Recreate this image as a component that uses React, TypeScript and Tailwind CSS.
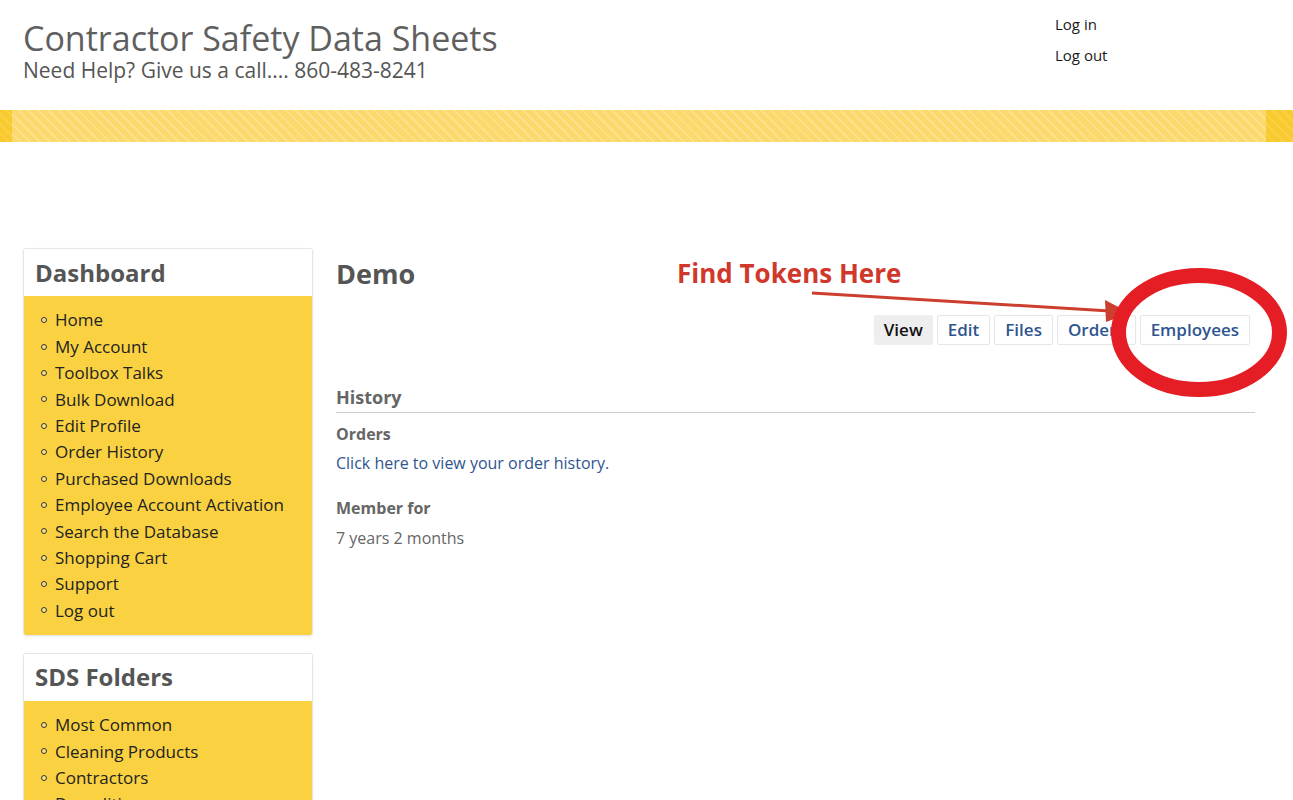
import React from "react";

const dashboardLinks = [
  "Home",
  "My Account",
  "Toolbox Talks",
  "Bulk Download",
  "Edit Profile",
  "Order History",
  "Purchased Downloads",
  "Employee Account Activation",
  "Search the Database",
  "Shopping Cart",
  "Support",
  "Log out",
];

const folderLinks = ["Most Common", "Cleaning Products", "Contractors", "Demolition"];

const tabs = ["View", "Edit", "Files", "Orders", "Employees"];

function SideBlock({ title, links }: { title: string; links: string[] }) {
  return (
    <div className="overflow-hidden rounded-[3px] border border-[#e6e6e6] shadow-[0_1px_3px_rgba(0,0,0,0.06)]">
      <div className="flex h-[47px] items-center bg-white px-[11px] text-[24px] font-bold text-[#555]">
        {title}
      </div>
      <ul className="bg-[#fad241] pb-[11px] pl-[17px] pt-[11px]">
        {links.map((l) => (
          <li key={l} className="flex h-[26.4px] items-center text-[17px] text-[#222]">
            <span className="mr-[8px] h-[6px] w-[6px] rounded-full border border-[#333] bg-[#fbe08a]" />
            {l}
          </li>
        ))}
      </ul>
    </div>
  );
}

export default function App() {
  return (
    <div className="relative min-h-[800px] bg-white font-['Open_Sans',sans-serif] text-[#555]">
      <header className="flex h-[110px] justify-between pl-[23px]">
        <div className="pt-[18px]">
          <h1 className="text-[34px] leading-[40px] text-[#5f5f5f]">Contractor Safety Data Sheets</h1>
          <p className="text-[21px] leading-[24px] text-[#555]">Need Help? Give us a call.... 860-483-8241</p>
        </div>
        <div className="w-[238px] pt-[9px] text-[15px] leading-[31px] text-[#1a1a1a]">
          <div>Log in</div>
          <div>Log out</div>
        </div>
      </header>

      <div className="flex h-[32px]">
        <div className="w-[12px] bg-[repeating-linear-gradient(45deg,#f9ca2e_0px,#f9ca2e_5px,#fad049_5px,#fad049_7px)]" />
        <div className="flex-1 bg-[repeating-linear-gradient(45deg,#fcd96c_0px,#fcd96c_5px,#fde08a_5px,#fde08a_7px)]" />
        <div className="w-[27px] bg-[repeating-linear-gradient(45deg,#f9ca2e_0px,#f9ca2e_5px,#fad049_5px,#fad049_7px)]" />
      </div>

      <div className="flex gap-[23px] pl-[23px] pr-[38px] pt-[106px]">
        <aside className="flex w-[290px] shrink-0 flex-col gap-[17px]">
          <SideBlock title="Dashboard" links={dashboardLinks} />
          <SideBlock title="SDS Folders" links={folderLinks} />
        </aside>

        <main className="flex-1">
          <h2 className="mt-[8px] text-[27px] font-bold leading-[36px] text-[#555]">Demo</h2>
          <nav className="mt-[23px] flex justify-end gap-[4px] pr-[5px]">
            {tabs.map((t) => (
              <a
                key={t}
                className={
                  t === "View"
                    ? "flex h-[30px] items-center rounded-[2px] bg-[#eeeeee] px-[10px] text-[17px] font-semibold text-[#111]"
                    : "flex h-[30px] items-center rounded-[2px] border border-[#e6e6e6] px-[10px] text-[17px] font-semibold text-[#2f5590]"
                }
              >
                {t}
              </a>
            ))}
          </nav>
          <h3 className="mt-[40px] border-b border-[#cccccc] pb-[3px] text-[18px] font-bold leading-[24px] text-[#666]">
            History
          </h3>
          <div className="mt-[8px] text-[16px] font-bold leading-[26px] text-[#666]">Orders</div>
          <a className="block text-[16px] leading-[32px] text-[#2f5590]">Click here to view your order history.</a>
          <div className="mt-[16px] text-[16px] font-bold leading-[26px] text-[#666]">Member for</div>
          <div className="mt-[4px] text-[16px] leading-[26px] text-[#666]">7 years 2 months</div>
        </main>
      </div>

      <div className="absolute left-[677px] top-[256px] text-[26px] font-bold leading-[34px] text-[#d0382b]">
        Find Tokens Here
      </div>
      <svg className="absolute left-0 top-0" width="1293" height="800" viewBox="0 0 1293 800" fill="none">
        <line x1="812" y1="293" x2="1110" y2="311" stroke="#cc3f2f" strokeWidth="3" />
        <polygon points="1130,313 1105,300 1106,322" fill="#cc3f2f" />
        <ellipse cx="1199" cy="332.5" rx="80.5" ry="57" stroke="#e41e24" strokeWidth="15" />
      </svg>
    </div>
  );
}
